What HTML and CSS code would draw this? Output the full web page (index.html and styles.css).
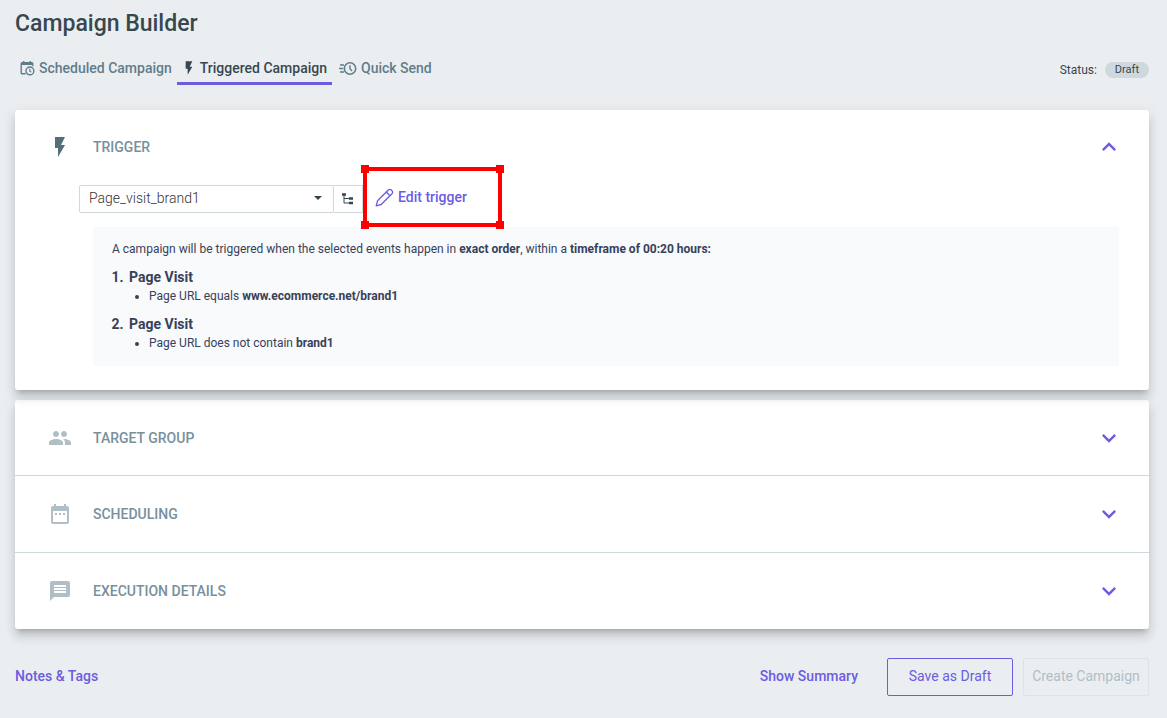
FILE: index.html
```html
<!DOCTYPE html>
<html lang="en">
<head>
  <meta charset="UTF-8">
  <meta name="viewport" content="width=device-width, initial-scale=1.0">
  <title>Campaign Builder</title>
  <link rel="stylesheet" href="styles.css">
</head>
<body>
  <h1>Campaign Builder</h1>

  <div class="topbar">
    <nav class="tabs">
      <a class="tab" href="#scheduled">
        <svg width="15" height="16" viewBox="0 0 15 16" fill="none" stroke="currentColor" stroke-width="1.4">
          <path d="M5.5 13.8H2.2a1 1 0 0 1-1-1V3.6a1 1 0 0 1 1-1h9.6a1 1 0 0 1 1 1v2.6"/>
          <path d="M1.5 3.8h11" stroke-width="2.4"/>
          <path d="M3.7 1v2M10.3 1v2"/>
          <circle cx="9.9" cy="10.9" r="3.9"/>
          <path d="M9.8 8.8v2.3l1.6 1" stroke-width="1.1"/>
        </svg>
        <span>Scheduled Campaign</span>
      </a>
      <a class="tab active" href="#triggered">
        <svg width="14" height="16" viewBox="1.5 0 21 24" fill="currentColor"><path d="M7 2v11h3v9l7-12h-4l4-8z"/></svg>
        <span>Triggered Campaign</span>
      </a>
      <a class="tab" href="#quick">
        <svg width="20" height="16" viewBox="0 0 20 16" fill="none" stroke="currentColor" stroke-width="1.6">
          <circle cx="13" cy="8.5" r="5.7"/>
          <path d="M13 5.2v3.6l2 2.2" stroke-width="1.4"/>
          <path d="M3 5h4M2 8.5h4M3 12h4" stroke-width="1.6"/>
        </svg>
        <span>Quick Send</span>
      </a>
    </nav>
    <div class="status">Status: <span class="badge">Draft</span></div>
  </div>

  <main>
    <section class="card card-open">
      <button class="row row-open" type="button" aria-expanded="true">
        <svg class="icon" viewBox="0 0 24 24"><path d="M7 2v11h3v9l7-12h-4l4-8z"/></svg>
        <span class="row-title">TRIGGER</span>
        <svg class="chevron" viewBox="0 0 24 24"><path d="M12 8l-6 6 1.410 1.410L12 10.830l4.590 4.580L18 14z"/></svg>
      </button>

      <div class="controls">
        <div class="select-wrap">
          <select aria-label="Trigger">
            <option>Page_visit_brand1</option>
          </select>
          <svg class="caret" width="8" height="4" viewBox="0 0 8 4"><path d="M0 0h8L4 4z"/></svg>
        </div>
        <button class="tree-btn" type="button" aria-label="Browse triggers">
          <svg width="12" height="12" viewBox="0 0 12 12" fill="none" stroke="#37474f">
            <path d="M2 2v8h5M2 5.500h5"/>
            <path d="M0 1.500h4M7 5.500h4M7 10h4" stroke-width="2.500"/>
          </svg>
        </button>
        <div class="highlight">
          <button class="edit-btn" type="button">
            <svg width="19" height="19" viewBox="0 0 19 19" fill="none" stroke="currentColor" stroke-width="1.300" stroke-linejoin="round">
              <path d="M1.200 17.800l1.300-5L13.300 2a2.100 2.100 0 0 1 3 0l.700.700a2.100 2.100 0 0 1 0 3L6.200 16.500z"/>
              <path d="M11.300 4l3.700 3.700"/>
            </svg>
            <span>Edit trigger</span>
          </button>
          <i class="handle tl"></i><i class="handle tr"></i><i class="handle bl"></i><i class="handle br"></i>
        </div>
      </div>

      <div class="summary">
        <p>A campaign will be triggered when the selected events happen in <b>exact order</b>, within a <b>timeframe of 00:20 hours:</b></p>
        <ol>
          <li>Page Visit
            <ul><li>Page URL equals <b>www.ecommerce.net/brand1</b></li></ul>
          </li>
          <li>Page Visit
            <ul><li>Page URL does not contain <b>brand1</b></li></ul>
          </li>
        </ol>
      </div>
    </section>

    <section class="card">
      <button class="row" type="button" aria-expanded="false">
        <svg class="icon muted" viewBox="0 0 24 24"><path d="M16 11c1.660 0 2.990-1.340 2.990-3S17.660 5 16 5c-1.660 0-3 1.340-3 3s1.340 3 3 3zm-8 0c1.660 0 2.990-1.340 2.990-3S9.660 5 8 5C6.340 5 5 6.340 5 8s1.340 3 3 3zm0 2c-2.330 0-7 1.170-7 3.500V19h14v-2.500c0-2.330-4.670-3.500-7-3.500zm8 0c-.290 0-.620.020-.970.050 1.160.840 1.970 1.970 1.970 3.450V19h6v-2.500c0-2.330-4.670-3.500-7-3.500z"/></svg>
        <span class="row-title">TARGET GROUP</span>
        <svg class="chevron" viewBox="0 0 24 24"><path d="M16.590 8.590L12 13.170 7.410 8.590 6 10l6 6 6-6z"/></svg>
      </button>
      <button class="row" type="button" aria-expanded="false">
        <svg class="icon muted" viewBox="0 0 24 24"><path d="M9 11H7v2h2v-2zm4 0h-2v2h2v-2zm4 0h-2v2h2v-2zm2-7h-1V2h-2v2H8V2H6v2H5c-1.110 0-1.990.900-1.990 2L3 20c0 1.100.890 2 2 2h14c1.100 0 2-.900 2-2V6c0-1.100-.900-2-2-2zm0 16H5V9h14v11z"/></svg>
        <span class="row-title">SCHEDULING</span>
        <svg class="chevron" viewBox="0 0 24 24"><path d="M16.590 8.590L12 13.170 7.410 8.590 6 10l6 6 6-6z"/></svg>
      </button>
      <button class="row" type="button" aria-expanded="false">
        <svg class="icon muted" viewBox="0 0 24 24"><path d="M20 2H4c-1.100 0-1.990.900-1.990 2L2 22l4-4h14c1.100 0 2-.900 2-2V4c0-1.100-.900-2-2-2zm-2 12H6v-2h12v2zm0-3H6V9h12v2zm0-3H6V6h12v2z"/></svg>
        <span class="row-title">EXECUTION DETAILS</span>
        <svg class="chevron" viewBox="0 0 24 24"><path d="M16.590 8.590L12 13.170 7.410 8.590 6 10l6 6 6-6z"/></svg>
      </button>
    </section>
  </main>

  <footer>
    <a class="link" href="#notes">Notes &amp; Tags</a>
    <div class="actions">
      <a class="link" href="#summary">Show Summary</a>
      <button class="btn" type="button">Save as Draft</button>
      <button class="btn" type="button" disabled>Create Campaign</button>
    </div>
  </footer>
</body>
</html>
```
FILE: styles.css
```css
* { margin: 0; padding: 0; box-sizing: border-box; }
body {
  font-family: Roboto, sans-serif;
  font-size: 14px;
  background: #ebeef1;
  color: #37474f;
  padding: 8px 18px 22px 15px;
}
button, select { font: inherit; color: inherit; background: none; border: 0; }
button { cursor: pointer; }
a { text-decoration: none; }
h1 {
  font-size: 23px;
  line-height: 32px;
  font-weight: 500;
}

/* Tabs and status */
.topbar {
  display: flex;
  justify-content: space-between;
  align-items: center;
  margin-top: 14px;
}
.tabs { display: flex; }
.tab {
  display: flex;
  align-items: center;
  gap: 4px;
  height: 31px;
  padding: 0 5px;
  color: #607d8b;
  font-weight: 500;
  border-bottom: 3px solid transparent;
}
.tab.active { color: #37474f; border-color: #6c5ce0; }
.status {
  display: flex;
  align-items: center;
  gap: 8px;
  font-size: 12px;
}
.badge {
  padding: 0 10px;
  border-radius: 8px;
  background: #cfd8dc;
  font-size: 11px;
  line-height: 16px;
}

/* Cards */
main {
  display: flex;
  flex-direction: column;
  gap: 10px;
  margin-top: 25px;
}
.card {
  background: #fff;
  border-radius: 3px;
  box-shadow: 0 5px 5px -3px rgba(0,0,0,0.2), 0 8px 10px 1px rgba(0,0,0,0.1), 0 3px 14px 2px rgba(0,0,0,0.06);
}
.card-open {
  position: relative;
  z-index: 1;
  padding-bottom: 24px;
}
.row {
  display: flex;
  align-items: center;
  width: 100%;
  height: 75px;
  padding: 0 26px 0 33px;
}
.row + .row { height: 77px; border-top: 1px solid #cfd8dc; }
.row-open { height: 73px; }
.icon { width: 24px; height: 24px; fill: #546e7a; }
.icon.muted { fill: #b0bec5; }
.row-title {
  flex: 1;
  margin-left: 21px;
  text-align: left;
  font-weight: 500;
  color: #78909c;
}
.chevron { width: 28px; height: 28px; fill: #6c5ce0; }

/* Trigger picker */
.controls {
  display: flex;
  align-items: center;
  height: 28px;
  margin: 2px 0 0 64px;
}
.select-wrap {
  position: relative;
  width: 255px;
}
.select-wrap select {
  appearance: none;
  width: 100%;
  height: 28px;
  padding: 0 24px 2px 9px;
  border: 1px solid #cfd8dc;
  border-radius: 2px;
  font-weight: 300;
  color: #333;
}
.caret {
  position: absolute;
  right: 12px;
  top: 11px;
  fill: #37474f;
  pointer-events: none;
}
.tree-btn {
  display: flex;
  align-items: center;
  justify-content: center;
  width: 29px;
  height: 28px;
  border: 1px solid #cfd8dc;
  border-left: 0;
}
.highlight {
  position: relative;
  width: 139px;
  height: 60px;
  margin-bottom: 4px;
  padding-left: 8px;
  border: 4px solid #f00;
}
.edit-btn {
  display: flex;
  align-items: center;
  gap: 4px;
  height: 100%;
  color: #6c5ce0;
  font-weight: 500;
}
.handle {
  position: absolute;
  width: 8px;
  height: 8px;
  background: #f00;
}
.tl, .tr { top: -6px; }
.bl, .br { bottom: -6px; }
.tl, .bl { left: -6px; }
.tr, .br { right: -6px; }

.summary {
  margin: 14px 30px 0 78px;
  padding: 13px 19px;
  background: #f9fafc;
  color: #37415a;
  font-size: 12px;
  line-height: 19px;
}
.summary b { font-weight: 700; }
.summary ol {
  padding-left: 15px;
  font-size: 14px;
  font-weight: 700;
}
.summary ol > li { margin-top: 9px; padding-left: 2px; }
.summary ul {
  padding-left: 20px;
  list-style: disc;
  font-size: 12px;
  font-weight: 400;
}

/* Footer */
footer {
  display: flex;
  justify-content: space-between;
  align-items: center;
  margin-top: 29px;
}
.actions { display: flex; align-items: center; gap: 10px; }
.link {
  padding-bottom: 2px;
  color: #6c5ce0;
  font-weight: 500;
}
.actions .link { margin-right: 19px; }
.btn {
  min-width: 126px;
  height: 38px;
  padding: 0 7px 2px;
  border: 1px solid #6c5ce0;
  border-radius: 2px;
  color: #6c5ce0;
}
.btn:disabled { color: #b0bec5; border-color: #dde2e5; cursor: default; }
```
